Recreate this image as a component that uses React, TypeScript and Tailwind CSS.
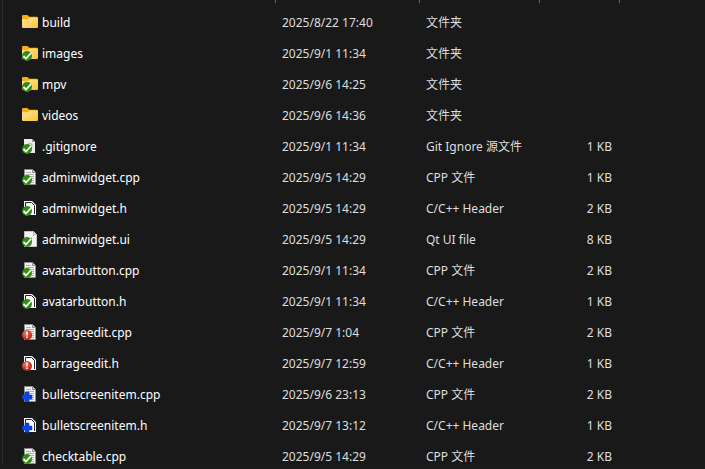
type Status = 'ok' | 'changed' | 'added' | null;
type Kind = 'folder' | 'text' | 'cpp' | 'h' | 'ui';

interface IFile {
  name: string;
  date: string;
  type: string;
  size: string;
  kind: Kind;
  status: Status;
}

const files: IFile[] = [
  { name: 'build', date: '2025/8/22 17:40', type: '文件夹', size: '', kind: 'folder', status: null },
  { name: 'images', date: '2025/9/1 11:34', type: '文件夹', size: '', kind: 'folder', status: 'ok' },
  { name: 'mpv', date: '2025/9/6 14:25', type: '文件夹', size: '', kind: 'folder', status: 'ok' },
  { name: 'videos', date: '2025/9/6 14:36', type: '文件夹', size: '', kind: 'folder', status: null },
  { name: '.gitignore', date: '2025/9/1 11:34', type: 'Git Ignore 源文件', size: '1 KB', kind: 'text', status: 'ok' },
  { name: 'adminwidget.cpp', date: '2025/9/5 14:29', type: 'CPP 文件', size: '1 KB', kind: 'cpp', status: 'ok' },
  { name: 'adminwidget.h', date: '2025/9/5 14:29', type: 'C/C++ Header', size: '2 KB', kind: 'h', status: 'ok' },
  { name: 'adminwidget.ui', date: '2025/9/5 14:29', type: 'Qt UI file', size: '8 KB', kind: 'ui', status: 'ok' },
  { name: 'avatarbutton.cpp', date: '2025/9/1 11:34', type: 'CPP 文件', size: '2 KB', kind: 'cpp', status: 'ok' },
  { name: 'avatarbutton.h', date: '2025/9/1 11:34', type: 'C/C++ Header', size: '1 KB', kind: 'h', status: 'ok' },
  { name: 'barrageedit.cpp', date: '2025/9/7 1:04', type: 'CPP 文件', size: '2 KB', kind: 'cpp', status: 'changed' },
  { name: 'barrageedit.h', date: '2025/9/7 12:59', type: 'C/C++ Header', size: '1 KB', kind: 'h', status: 'changed' },
  { name: 'bulletscreenitem.cpp', date: '2025/9/6 23:13', type: 'CPP 文件', size: '2 KB', kind: 'cpp', status: 'added' },
  { name: 'bulletscreenitem.h', date: '2025/9/7 13:12', type: 'C/C++ Header', size: '1 KB', kind: 'h', status: 'added' },
  { name: 'checktable.cpp', date: '2025/9/5 14:29', type: 'CPP 文件', size: '2 KB', kind: 'cpp', status: 'ok' },
];

function FileIcon({ kind, status }: { kind: Kind; status: Status }) {
  return (
    <svg viewBox="0 0 16 16" className="mb-0.5 h-4 w-4 shrink-0" aria-hidden="true">
      <defs>
        <linearGradient id="folder" x1="0" y1="0" x2="1" y2="1">
          <stop offset="0" stopColor="#ffe69b" />
          <stop offset="1" stopColor="#fdc535" />
        </linearGradient>
        <radialGradient id="red" cx="0.4" cy="0.3" r="0.7">
          <stop offset="0" stopColor="#f0775c" />
          <stop offset="1" stopColor="#b81f10" />
        </radialGradient>
      </defs>
      {kind === 'folder' && (
        <>
          <path d="M0 2.3a1.3 1.3 0 0 1 1.3-1.3h4L7.4 2.8H14.7A1.3 1.3 0 0 1 16 4V8H0z" fill="#f9ae12" />
          <path d="M0 5.2h5.6l2-1.7h7.1A1.3 1.3 0 0 1 16 4.8v8A1.2 1.2 0 0 1 14.8 14H1.2A1.2 1.2 0 0 1 0 12.8z" fill="url(#folder)" />
        </>
      )}
      {kind === 'text' && (
        <>
          <path d="M2 1h8l3 3v11H2z" fill="#ececec" />
          <path d="M10 1v3h3z" fill="#9a9a9a" />
          <circle cx="8" cy="7.5" r="2" fill="none" stroke="#a9b0b8" strokeWidth="1.2" />
        </>
      )}
      {kind === 'cpp' && (
        <>
          <path d="M2.5 .5h8l3 3v12h-11z" fill="#f4f4f4" stroke="#8d8d8d" />
          <path d="M10.5 .5v3h3" fill="#d0d0d0" stroke="#8d8d8d" />
          <path d="M4 3.5h5M4 5.5h8M4 7.5h8M4 9.5h8M4 11.5h8M4 13.5h8" stroke="#b0b0b0" />
        </>
      )}
      {kind === 'h' && (
        <>
          <path d="M2 1h8l4 4v10H2z" fill="#f6f6f6" />
          <path d="M3.5 14V2.5H9.5L12.5 5.5V14" fill="none" stroke="#222" />
          <path d="M5 4h4v3h3v7H5z" fill="#fff" />
        </>
      )}
      {kind === 'ui' && (
        <>
          <path d="M2.5 .5h9l3 3v12h-12z" fill="#f3f3f3" stroke="#c4c4c4" />
          <path d="M11.5 .5v3h3" fill="#ddd" stroke="#bbb" />
          <path d="M9.5 6.5v4M11.5 4v1" stroke="#6fa6c8" />
        </>
      )}
      {status === 'ok' && (
        <>
          <circle cx="5" cy="11" r="5" fill="#2f8f13" />
          <path d="M1.5 11l2.5 2.5L9 8" fill="none" stroke="#fff" strokeWidth="1.8" />
        </>
      )}
      {status === 'changed' && (
        <>
          <circle cx="5" cy="11" r="5" fill="url(#red)" />
          <path d="M5 7.5v4M5 12.5v1.5" stroke="#fff" strokeWidth="1.6" />
        </>
      )}
      {status === 'added' && (
        <path d="M3 6h4v3h3v4H7v2.5H3V13H0V9h3z" fill="#0d45e0" stroke="#0a2fb0" strokeWidth=".5" />
      )}
    </svg>
  );
}

export default function App() {
  return (
    <main className="flex h-screen flex-col overflow-hidden bg-[#191919] font-['Noto_Sans','Noto_Sans_CJK_SC',sans-serif]">
      <div className="ml-[2px] min-h-0 flex-1 overflow-hidden border-l border-[#2b2b2b]">
        <table className="w-full table-fixed border-collapse text-left text-xs">
          <colgroup>
            <col className="w-[273px]" />
            <col className="w-36" />
            <col className="w-[120px]" />
            <col className="w-20" />
            <col />
          </colgroup>
          <thead>
            <tr>
              <th className="h-[7px] p-0 align-top"><div className="h-[3px] border-r border-[#636363]" /></th>
              <th className="h-[7px] p-0 align-top"><div className="h-[3px] border-r border-[#636363]" /></th>
              <th className="h-[7px] p-0 align-top"><div className="h-[3px] border-r border-[#636363]" /></th>
              <th className="h-[7px] p-0 align-top"><div className="h-[3px] border-r border-[#636363]" /></th>
              <th className="h-[7px] p-0" />
            </tr>
          </thead>
          <tbody>
            {files.map((file) => (
              <tr key={file.name} className="h-[31px] whitespace-nowrap text-[#dedede]">
                <td className="p-0 pl-[19px]">
                  <div className="flex items-center gap-1 leading-4 text-white">
                    <FileIcon kind={file.kind} status={file.status} />
                    {file.name}
                  </div>
                </td>
                <td className="p-0 pl-[6px]">{file.date}</td>
                <td className="p-0 pl-[6px]">{file.type}</td>
                <td className="p-0 pr-2 text-right">{file.size}</td>
                <td className="p-0" />
              </tr>
            ))}
          </tbody>
        </table>
      </div>
      <div className="h-1 bg-[#1c1c1c]" />
    </main>
  );
}
